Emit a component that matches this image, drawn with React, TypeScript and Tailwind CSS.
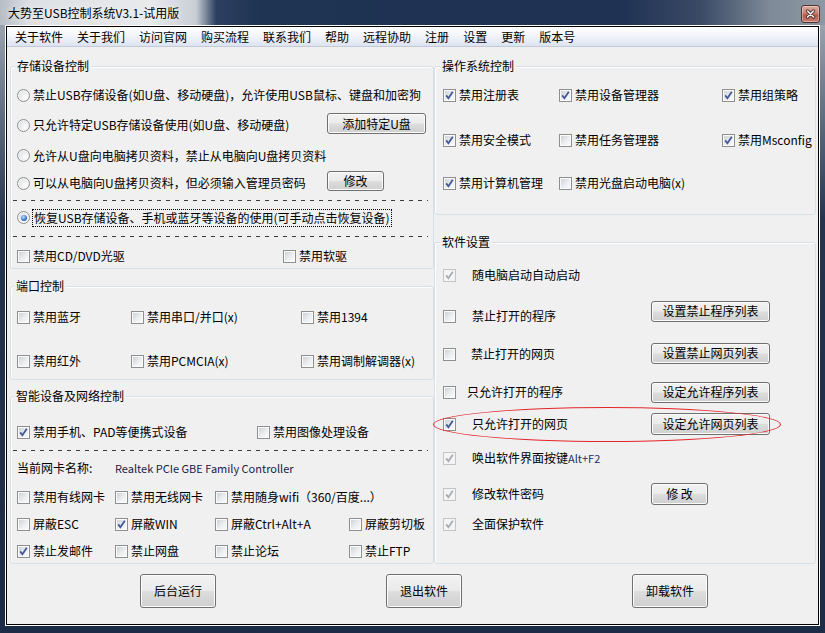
import type { ReactNode } from 'react';
import clsx from 'clsx';

const menu = ['关于软件', '关于我们', '访问官网', '购买流程', '联系我们', '帮助', '远程协助', '注册', '设置', '更新', '版本号'];

function Box({ checked = false, disabled = false }: { checked?: boolean; disabled?: boolean }) {
  return (
    <span
      className={clsx(
        'flex h-[13px] w-[13px] shrink-0 items-center justify-center border',
        disabled
          ? 'border-[#c2c4c6] bg-[#f4f4f4]'
          : 'border-[#8e8f8f] bg-[linear-gradient(135deg,#c9cdd2_0%,#eceef0_55%,#fbfbfb_100%)] shadow-[inset_0_0_0_1px_#fbfbfb]'
      )}
    >
      {checked && (
        <svg width="11" height="11" viewBox="0 0 11 11">
          <path d="M2.2 5.4 4.4 8.2 8.8 1.8" fill="none" stroke={disabled ? '#a9abae' : '#42589a'} strokeWidth="1.8" />
        </svg>
      )}
    </span>
  );
}

function Radio({ on = false }: { on?: boolean }) {
  return (
    <span className="flex h-[13px] w-[13px] shrink-0 items-center justify-center rounded-full border border-[#8e8f8f] bg-[radial-gradient(circle_at_65%_65%,#fdfdfd,#d5d8dc)] shadow-[inset_0_0_0_1px_#f8f8f8]">
      {on && <span className="h-[6px] w-[6px] rounded-full bg-[radial-gradient(circle_at_40%_35%,#bfe0ff,#2b66c6_65%,#173d85)]" />}
    </span>
  );
}

function Chk({ label, checked, disabled, className }: { label: ReactNode; checked?: boolean; disabled?: boolean; className?: string }) {
  return (
    <div className={clsx('flex items-center gap-[3px]', className)}>
      <Box checked={checked} disabled={disabled} />
      <span className="whitespace-nowrap">{label}</span>
    </div>
  );
}

function Btn({ children, className }: { children: ReactNode; className?: string }) {
  return (
    <button
      className={clsx(
        'flex shrink-0 items-center justify-center whitespace-nowrap rounded-[3px] border border-[#707070] bg-[linear-gradient(to_bottom,#f2f2f2_0%,#ebebeb_48%,#dddddd_52%,#cfcfcf_100%)] text-[12px] leading-none text-black shadow-[inset_0_0_0_1px_#fbfbfb]',
        className
      )}
    >
      {children}
    </button>
  );
}

function Group({ title, titleLeft, className, children }: { title: string; titleLeft: string; className?: string; children: ReactNode }) {
  return (
    <div className={clsx('relative rounded-[3px] border border-[#d5dfe5] shadow-[inset_1px_1px_0_#ffffff]', className)}>
      <span className={clsx('absolute top-[-8px] bg-[#f0f0f0] px-[2px] leading-[14px]', titleLeft)}>{title}</span>
      {children}
    </div>
  );
}

function Dashed() {
  return <div className="-ml-[4px] h-px w-[415px] bg-[repeating-linear-gradient(to_right,#3c3c3c_0px,#3c3c3c_4px,transparent_4px,transparent_9px)]" />;
}

function SetRow({ label, checked, disabled, labelMl, className, button }: {
  label: ReactNode; checked?: boolean; disabled?: boolean; labelMl: string; className: string; button?: ReactNode;
}) {
  return (
    <div className={clsx('flex h-[24px] items-center', className)}>
      <div className="flex w-[208px] items-center">
        <Box checked={checked} disabled={disabled} />
        <span className={clsx('whitespace-nowrap', labelMl)}>{label}</span>
      </div>
      {button}
    </div>
  );
}

export default function App() {
  return (
    <div className="flex h-[633px] w-[825px] flex-col overflow-hidden bg-[linear-gradient(to_bottom,#aab3bd_0px,#6f7c8d_90px,#24344f_220px,#1d2c46_100%)] font-['Noto_Sans_CJK_SC',sans-serif] text-[12px] leading-[14px] text-black">
      {/* title bar */}
      <div className="flex h-[25px] shrink-0 justify-between bg-[linear-gradient(to_right,#b6bdc5_0px,#dde0e4_30px,#e8eaec_150px,#c8ced5_196px,#2d4061_216px,#1f3353_260px,#1f3254_620px,#3a4a65_700px,#7e8a98_770px,#8e98a4_825px)] pr-[5px]">
        <span className="pl-[8px] pt-[6px] [text-shadow:0_0_6px_rgba(255,255,255,0.9)]">大势至USB控制系统V3.1-试用版</span>
        <span className="mt-[5px] flex h-[18px] w-[19px] items-center justify-center rounded-[3px] border border-[#4e3632] bg-[linear-gradient(to_bottom,#deaaa0_0%,#c98275_45%,#b35c4d_55%,#c57a6c_100%)] shadow-[inset_0_0_0_1px_rgba(255,255,255,0.35)]">
          <svg width="11" height="10" viewBox="0 0 11 10">
            <path d="M2.5 2 8.5 8M8.5 2 2.5 8" stroke="#4a3430" strokeWidth="3.2" strokeLinecap="round" />
            <path d="M2.5 2 8.5 8M8.5 2 2.5 8" stroke="#f4f0ef" strokeWidth="1.6" strokeLinecap="round" />
          </svg>
        </span>
      </div>

      <div className="mx-[5px] h-[601px] border border-white">
        <div className="flex h-full flex-col border border-black bg-[#f0f0f0]">
          {/* menu */}
          <div className="flex h-[20px] shrink-0 border-b border-[#c3cbdb] bg-[linear-gradient(to_bottom,#ffffff_0%,#f3f5fa_45%,#dce3f0_100%)] pl-[1px]">
            {menu.map((m) => (
              <span key={m} className="px-[7px] leading-[19px]">{m}</span>
            ))}
          </div>

          <div className="flex pl-[3px] pt-[19px]">
            {/* left column */}
            <div className="flex w-[424px] flex-col">
              <Group title="存储设备控制" titleLeft="left-[4px]" className="h-[203px]">
                <div className="flex flex-col pl-[6px] pt-[13px]">
                  <div className="flex h-[30px] items-center gap-[3px]">
                    <Radio />
                    <span className="whitespace-nowrap">禁止USB存储设备(如U盘、移动硬盘)，允许使用USB鼠标、键盘和加密狗</span>
                  </div>
                  <div className="flex h-[30px] items-center">
                    <div className="flex w-[310px] items-center gap-[3px]">
                      <Radio />
                      <span className="whitespace-nowrap">只允许特定USB存储设备使用(如U盘、移动硬盘)</span>
                    </div>
                    <Btn className="mb-[3px] h-[21px] w-[99px]">添加特定U盘</Btn>
                  </div>
                  <div className="flex h-[31px] items-center gap-[3px]">
                    <Radio />
                    <span className="whitespace-nowrap">允许从U盘向电脑拷贝资料，禁止从电脑向U盘拷贝资料</span>
                  </div>
                  <div className="flex h-[24px] items-center">
                    <div className="flex w-[310px] items-center gap-[3px]">
                      <Radio />
                      <span className="whitespace-nowrap">可以从电脑向U盘拷贝资料，但必须输入管理员密码</span>
                    </div>
                    <Btn className="mb-[4px] h-[20px] w-[57px]">修改</Btn>
                  </div>
                  <div className="mt-[5px]">
                    <Dashed />
                  </div>
                  <div className="mt-[4px] flex h-[25px] items-center">
                    <Radio on />
                    <span className="ml-[2px] whitespace-nowrap border border-dotted border-black px-px leading-[16px]">
                      恢复USB存储设备、手机或蓝牙等设备的使用(可手动点击恢复设备)
                    </span>
                  </div>
                  <div className="mt-[6px]">
                    <Dashed />
                  </div>
                  <div className="mt-[7px] flex h-[24px] items-center">
                    <Chk label="禁用CD/DVD光驱" className="w-[266px]" />
                    <Chk label="禁用软驱" />
                  </div>
                </div>
              </Group>

              <Group title="端口控制" titleLeft="left-[3px]" className="mt-[17px] h-[94px]">
                <div className="flex flex-col pl-[6px] pt-[18px]">
                  <div className="flex h-[24px] items-center">
                    <Chk label="禁用蓝牙" className="w-[114px]" />
                    <Chk label="禁用串口/并口(x)" className="w-[170px]" />
                    <Chk label="禁用1394" />
                  </div>
                  <div className="mt-[20px] flex h-[24px] items-center">
                    <Chk label="禁用红外" className="w-[114px]" />
                    <Chk label="禁用PCMCIA(x)" className="w-[170px]" />
                    <Chk label="禁用调制解调器(x)" />
                  </div>
                </div>
              </Group>

              <Group title="智能设备及网络控制" titleLeft="left-[3px]" className="mt-[16px] h-[168px]">
                <div className="flex flex-col pl-[6px] pt-[23px]">
                  <div className="flex h-[24px] items-center">
                    <Chk label="禁用手机、PAD等便携式设备" checked className="w-[240px]" />
                    <Chk label="禁用图像处理设备" />
                  </div>
                  <div className="mt-[6px]">
                    <Dashed />
                  </div>
                  <div className="mt-[7px] flex h-[20px] items-center">
                    <span className="w-[98px]">当前网卡名称:</span>
                    <span className="text-[11px] text-[#14224a]">Realtek PCIe GBE Family Controller</span>
                  </div>
                  <div className="mt-[9px] flex h-[20px] items-center">
                    <Chk label="禁用有线网卡" className="w-[98px]" />
                    <Chk label="禁用无线网卡" className="w-[100px]" />
                    <Chk label="禁用随身wifi（360/百度...）" />
                  </div>
                  <div className="mt-[7px] flex h-[20px] items-center">
                    <Chk label="屏蔽ESC" className="w-[98px]" />
                    <Chk label="屏蔽WIN" checked className="w-[100px]" />
                    <Chk label="屏蔽Ctrl+Alt+A" className="w-[134px]" />
                    <Chk label="屏蔽剪切板" />
                  </div>
                  <div className="mt-[7px] flex h-[20px] items-center">
                    <Chk label="禁止发邮件" checked className="w-[98px]" />
                    <Chk label="禁止网盘" className="w-[100px]" />
                    <Chk label="禁止论坛" className="w-[134px]" />
                    <Chk label="禁止FTP" />
                  </div>
                </div>
              </Group>
            </div>

            {/* right column */}
            <div className="flex w-[382px] flex-col">
              <Group title="操作系统控制" titleLeft="left-[5px]" className="h-[149px]">
                <div className="flex flex-col pl-[8px] pt-[16px]">
                  <div className="flex h-[24px] items-center">
                    <Chk label="禁用注册表" checked className="w-[116px]" />
                    <Chk label="禁用设备管理器" checked className="w-[163px]" />
                    <Chk label="禁用组策略" checked />
                  </div>
                  <div className="mt-[21px] flex h-[24px] items-center">
                    <Chk label="禁用安全模式" checked className="w-[116px]" />
                    <Chk label="禁用任务管理器" className="w-[163px]" />
                    <Chk label="禁用Msconfig" checked />
                  </div>
                  <div className="mt-[19px] flex h-[24px] items-center">
                    <Chk label="禁用计算机管理" checked className="w-[116px]" />
                    <Chk label="禁用光盘启动电脑(x)" />
                  </div>
                </div>
              </Group>

              <Group title="软件设置" titleLeft="left-[5px]" className="mt-[27px] h-[322px]">
                <div className="flex flex-col pl-[8px] pt-[20px]">
                  <SetRow label="随电脑启动自动启动" checked disabled labelMl="ml-[16px]" className="" />
                  <SetRow
                    label="禁止打开的程序"
                    labelMl="ml-[16px]"
                    className="mt-[17px]"
                    button={<Btn className="mb-[10px] h-[21px] w-[119px]">设置禁止程序列表</Btn>}
                  />
                  <SetRow
                    label="禁止打开的网页"
                    labelMl="ml-[15px]"
                    className="mt-[14px]"
                    button={<Btn className="mb-[2px] h-[21px] w-[119px]">设置禁止网页列表</Btn>}
                  />
                  <SetRow
                    label="只允许打开的程序"
                    labelMl="ml-[11px]"
                    className="mt-[14px]"
                    button={<Btn className="h-[21px] w-[119px]">设定允许程序列表</Btn>}
                  />
                  <SetRow
                    label="只允许打开的网页"
                    checked
                    labelMl="ml-[16px]"
                    className="mt-[8px]"
                    button={<Btn className="h-[22px] w-[119px]">设定允许网页列表</Btn>}
                  />
                  <SetRow
                    label={<>唤出软件界面按键<span className="text-[11px] text-[#1c2f6a]">Alt+F2</span></>}
                    checked
                    disabled
                    labelMl="ml-[16px]"
                    className="mt-[10px]"
                  />
                  <SetRow
                    label="修改软件密码"
                    checked
                    disabled
                    labelMl="ml-[16px]"
                    className="mt-[12px]"
                    button={<Btn className="h-[22px] w-[57px]">修&nbsp;改</Btn>}
                  />
                  <SetRow label="全面保护软件" checked disabled labelMl="ml-[16px]" className="mt-[6px]" />
                </div>
                {/* red annotation ring */}
                <div className="pointer-events-none absolute left-[-2px] top-[164px] h-[35px] w-[348px] rounded-[50%] border border-[#e3262c]" />
              </Group>
            </div>
          </div>

          {/* bottom buttons */}
          <div className="flex gap-[170px] pl-[133px] pt-[10px]">
            <Btn className="h-[34px] w-[76px]">后台运行</Btn>
            <Btn className="h-[34px] w-[76px]">退出软件</Btn>
            <Btn className="h-[34px] w-[76px]">卸载软件</Btn>
          </div>
        </div>
      </div>
    </div>
  );
}
